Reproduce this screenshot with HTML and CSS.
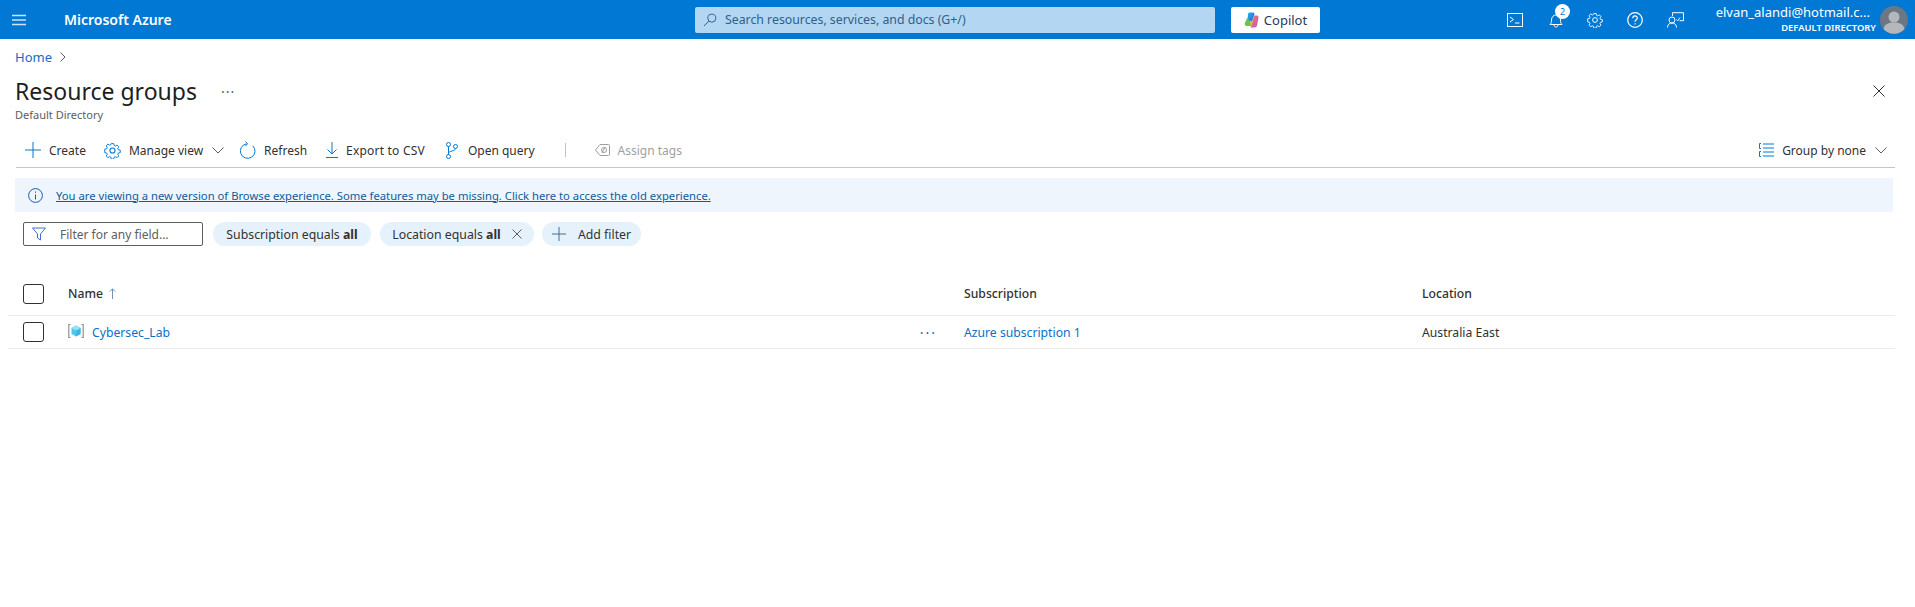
FILE: index.html
```html
<!DOCTYPE html>
<html>
<head>
    <meta charset="utf-8">
    <title>Resource groups - Microsoft Azure</title>
    <link rel="stylesheet" href="styles.css">
</head>
<body>
    <header class="topbar">
        <svg class="menu-icon" width="14" height="12" viewBox="0 0 14 12"><path d="M0 1.5h14M0 6h14M0 10.5h14" stroke="#cfe4f7" stroke-width="1.4"/></svg>
        <div class="brand">Microsoft Azure</div>
        <div class="search">
            <svg width="14" height="14" viewBox="0 0 14 14" fill="none" stroke="#33638f" stroke-width="1"><circle cx="8.8" cy="5.2" r="4"/><path d="M5.900 8 1 13"/></svg>
            <span>Search resources, services, and docs (G+/)</span>
        </div>
        <div class="copilot">
            <svg width="15" height="16" viewBox="0 0 15 16">
                <defs>
                    <linearGradient id="cpa" x1="0" y1="0" x2="1" y2="1"><stop offset="0" stop-color="#1fb6e8"/><stop offset="1" stop-color="#2f62d6"/></linearGradient>
                    <linearGradient id="cpb" x1="0" y1="0" x2="1" y2="1"><stop offset="0" stop-color="#f0843c"/><stop offset="1" stop-color="#c94fd8"/></linearGradient>
                </defs>
                <path d="M5.500 .5h3.500c1.200 0 1.700 1 1.400 2L8 10H3.500L4 2.500C4.100 1.200 4.500.5 5.500.5z" fill="url(#cpa)"/>
                <path d="M10.500 3.500h2.300c1.300 0 2 1 1.700 2.300l-1.300 7.200c-.3 1.500-1.200 2.500-2.700 2.500H6.500L9.500 6z" fill="url(#cpb)"/>
                <path d="M3.500 5.500 1 10.500c-.7 2 .3 3.500 2 3.500h4.500L9 9H5.500z" fill="#6cc24a"/>
                <path d="M5.500 9H9l-1.500 5H6.800z" fill="#e9b23c"/>
            </svg>
            <span>Copilot</span>
        </div>
        <div class="top-icons">
            <svg width="16" height="14" viewBox="0 0 16 14" fill="none" stroke="#fff"><rect x=".5" y=".5" width="15" height="13"/><path d="m3 4 3.500 2.500L3 9M8 10h4.500"/></svg>
            <div class="bell">
                <svg width="14" height="16" viewBox="0 0 14 16" fill="none" stroke="#fff"><path d="M1 12.500c1.200-1 1.500-2 1.500-4.500 0-3 2-5 4.500-5s4.500 2 4.500 5c0 2.500.3 3.500 1.500 4.500zM5 12.800c0 3 4 3 4 0"/></svg>
                <span class="badge">2</span>
            </div>
            <svg width="16" height="16" viewBox="0 0 16 16" fill="none" stroke="#fff"><use href="#gear"/></svg>
            <svg width="16" height="16" viewBox="0 0 16 16" fill="none" stroke="#fff" stroke-width="1.200"><circle cx="8" cy="8" r="7.300"/><path d="M5.800 6.200c0-3 4.500-3 4.500-.2 0 1.800-2.300 1.800-2.300 3.700"/><path d="M8 11.200v1.300"/></svg>
            <svg width="17" height="16" viewBox="0 0 17 16" fill="none" stroke="#fff"><path d="M5.500 4V.7h11v8h-4"/><path d="m9.500 7.500 1.300 1.300L13 5.500" stroke-width=".9"/><circle cx="5" cy="8" r="3"/><path d="M.5 15.500c0-3 2-4.500 4.500-4.500s4.500 1.500 4.500 4.500"/></svg>
        </div>
        <div class="account">
            <div class="acc-mail">elvan_alandi@hotmail.c...</div>
            <div class="acc-dir">DEFAULT DIRECTORY</div>
        </div>
        <svg class="avatar" width="28" height="28" viewBox="0 0 28 28"><circle cx="14" cy="14" r="14" fill="#6b7785"/><circle cx="14" cy="11" r="5.500" fill="#b4b8bd"/><path d="M3.500 23c1-5 5-6.500 10.500-6.500S23.500 18 24.500 23a14 14 0 0 1-21 0z" fill="#b4b8bd"/></svg>
    </header>

    <svg width="0" height="0" class="defs">
        <symbol id="gear" viewBox="0 0 16 16">
            <path d="M6.700.8h2.600l.4 2 1.300.6 1.800-1.100 1.800 1.800-1.100 1.800.6 1.300 2 .4v2.600l-2 .4-.6 1.300 1.100 1.800-1.800 1.800-1.800-1.100-1.300.6-.4 2H6.700l-.4-2-1.300-.6-1.800 1.100-1.800-1.800 1.100-1.800-.6-1.300-2-.4V6.600l2-.4.600-1.300-1.100-1.800 1.800-1.800L5 2.400l1.300-.6z" transform="translate(.8 .8) scale(.9)"/>
            <circle cx="8" cy="8" r="2.400"/>
        </symbol>
    </svg>

    <main class="page">
        <div class="crumbs">
            <a class="link" href="#">Home</a>
            <svg width="6" height="10" viewBox="0 0 6 10" fill="none" stroke="#605e5c"><path d="m.5.500 4.500 4.500L.5 9.500"/></svg>
        </div>

        <div class="title-row">
            <h1>Resource groups</h1>
            <span class="title-dots">···</span>
            <svg class="close" width="12" height="12" viewBox="0 0 12 12" stroke="#323130"><path d="m.5.500 11 11M11.500.500l-11 11"/></svg>
        </div>
        <div class="subtitle">Default Directory</div>

        <div class="toolbar">
            <div class="tool t-create">
                <svg width="16" height="16" viewBox="0 0 16 16" stroke="#0078d4"><path d="M8 0v16M0 8h16"/></svg>
                <span>Create</span>
            </div>
            <div class="tool t-manage">
                <svg width="17" height="17" viewBox="0 0 16 16" fill="none" stroke="#0078d4"><use href="#gear"/></svg>
                <span>Manage view</span>
                <svg class="chev" width="12" height="7" viewBox="0 0 12 7" fill="none" stroke="#605e5c"><path d="m.5.500 5.500 5.500L11.500.500"/></svg>
            </div>
            <div class="tool t-refresh">
                <svg width="16" height="18" viewBox="0 0 16 18" fill="none" stroke="#0078d4"><path d="M12.800 4.800a7.300 7.300 0 1 1-6.300-2"/><path d="M5.500 .5 7.500 2.800 5.500 5"/></svg>
                <span>Refresh</span>
            </div>
            <div class="tool t-export">
                <svg width="12" height="16" viewBox="0 0 12 16" fill="none" stroke="#0078d4"><path d="M6 0v12M1.500 7.500 6 12l4.500-4.500M0 15.500h12"/></svg>
                <span>Export to CSV</span>
            </div>
            <div class="tool t-query">
                <svg width="12" height="17" viewBox="0 0 12 17" fill="none" stroke="#0078d4"><circle cx="2.500" cy="2.500" r="2"/><circle cx="2.500" cy="14.500" r="2"/><circle cx="9.500" cy="4.500" r="2"/><path d="M2.500 4.500v8M9.500 6.500c0 3-7 2-7 5"/></svg>
                <span>Open query</span>
            </div>
            <div class="tool-sep"></div>
            <div class="tool t-tags muted">
                <svg width="15" height="12" viewBox="0 0 15 12" fill="none" stroke="#a19f9d"><path d="M5 .5h8.500a1 1 0 0 1 1 1v9a1 1 0 0 1-1 1H5L.5 6zM10 3 7 9"/><circle cx="9" cy="6" r="2.500"/></svg>
                <span>Assign tags</span>
            </div>
            <div class="tool t-group">
                <svg width="15" height="14" viewBox="0 0 15 14" fill="none" stroke="#0078d4"><path d="M4 1h11M4 5h11M4 9h11M4 13h11M2 .5H.5v5H2M2 8.500H.5v5H2"/></svg>
                <span>Group by none</span>
                <svg class="chev" width="12" height="7" viewBox="0 0 12 7" fill="none" stroke="#605e5c"><path d="m.5.500 5.500 5.500L11.500.500"/></svg>
            </div>
        </div>

        <div class="notice">
            <svg width="15" height="15" viewBox="0 0 15 15" fill="none" stroke="#0f5cc0"><circle cx="7.500" cy="7.500" r="6.900"/><path d="M7.500 6.500v5M7.500 3.500v1.300"/></svg>
            <a href="#">You are viewing a new version of Browse experience. Some features may be missing. Click here to access the old experience.</a>
        </div>

        <div class="filters">
            <div class="filter-box">
                <svg width="14" height="14" viewBox="0 0 14 14" fill="none" stroke="#3f6fd8"><path d="M.5 1h13L8.500 7v6l-3-2V7z"/></svg>
                <span>Filter for any field...</span>
            </div>
            <div class="pill p-sub"><span>Subscription equals <b>all</b></span></div>
            <div class="pill p-loc">
                <span>Location equals <b>all</b></span>
                <svg width="10" height="10" viewBox="0 0 10 10" stroke="#605e5c"><path d="m.5.500 9 9M9.500.500l-9 9"/></svg>
            </div>
            <div class="pill p-add">
                <svg width="14" height="14" viewBox="0 0 14 14" stroke="#3a6f9e"><path d="M7 0v14M0 7h14"/></svg>
                <span>Add filter</span>
            </div>
        </div>

        <div class="grid">
            <div class="row head">
                <div class="cell-check"><span class="check"></span></div>
                <div class="cell-name">
                    <span>Name</span>
                    <svg class="sort" width="7" height="11" viewBox="0 0 7 11" fill="none" stroke="#6f95b5"><path d="M3.500 11V.8M.8 3.500 3.500.8l2.700 2.700"/></svg>
                </div>
                <div>Subscription</div>
                <div>Location</div>
            </div>
            <div class="row item">
                <div class="cell-check"><span class="check"></span></div>
                <div class="cell-name">
                    <svg class="rg-icon" width="16" height="16" viewBox="0 0 16 16">
                        <path d="M2.500 1.500H.8v13h1.700M13.500 1.500h1.700v13h-1.700" fill="none" stroke="#8a8a8a" stroke-width="1.100"/>
                        <path d="m8 2.500 4.500 2.500v6L8 13.500 3.500 11V5z" fill="#50c7e8"/>
                        <path d="m8 8 4.500-3v6L8 13.500z" fill="#3fb4e6"/>
                        <path d="m8 2.500 4.500 2.500L8 7.600 3.500 5z" fill="#8fe3f5"/>
                    </svg>
                    <a class="link" href="#">Cybersec_Lab</a>
                    <span class="row-dots">···</span>
                </div>
                <div><a class="link" href="#">Azure subscription 1</a></div>
                <div>Australia East</div>
            </div>
        </div>
    </main>
</body>
</html>
```

FILE: styles.css
```css
body {
    margin: 0;
    background: #fff;
    color: #323130;
    font-family: "Noto Sans", "Open Sans", sans-serif;
    font-size: 12px;
}
a {
    text-decoration: none;
}
.link {
    color: #0b6fc9;
}
.defs {
    display: block;
    height: 0;
}

/* top bar */
.topbar {
    display: flex;
    align-items: center;
    height: 39px;
    background: #0078d4;
    color: #fff;
}
.menu-icon {
    margin-left: 12px;
}
.brand {
    margin-left: 38px;
    width: 631px;
    font-size: 14px;
    font-weight: 600;
}
.search {
    display: flex;
    align-items: center;
    gap: 8px;
    box-sizing: border-box;
    width: 520px;
    height: 26px;
    padding-left: 8px;
    background: #b3d6f2;
    border-radius: 2px;
    color: #2f5f8a;
    font-size: 12.3px;
}
.copilot {
    display: flex;
    align-items: center;
    justify-content: center;
    gap: 5px;
    width: 89px;
    height: 26px;
    margin-left: 16px;
    background: #fff;
    border-radius: 2px;
    color: #243a5e;
    font-size: 13px;
}
.top-icons {
    display: flex;
    align-items: center;
    margin-left: 187px;
    gap: 24px;
}
.bell {
    position: relative;
    display: flex;
    margin-left: 2px;
}
.badge {
    position: absolute;
    left: 6px;
    top: -8px;
    width: 15px;
    height: 15px;
    border-radius: 50%;
    background: #fff;
    color: #0078d4;
    font-size: 9px;
    line-height: 15px;
    text-align: center;
}
.account {
    width: 193px;
    margin-left: -1px;
    text-align: right;
}
.acc-mail {
    padding-right: 6px;
    font-size: 13px;
    line-height: 16px;
}
.acc-dir {
    font-size: 9.4px;
    font-weight: 600;
    line-height: 15px;
}
.avatar {
    margin-left: 4px;
}

/* page */
.crumbs {
    display: flex;
    align-items: center;
    gap: 8px;
    height: 18px;
    margin: 9px 0 0 15px;
    font-size: 13px;
}
.title-row {
    display: flex;
    align-items: center;
    height: 32px;
    margin: 9px 0 0 15px;
}
h1 {
    margin: 0;
    font-size: 23px;
    font-weight: 400;
    color: #201f1e;
}
.title-dots {
    margin-left: 24px;
    color: #605e5c;
    font-size: 14px;
    letter-spacing: 1px;
}
.close {
    margin-left: auto;
    margin-right: 30px;
}
.subtitle {
    margin: 0 0 0 15px;
    height: 16px;
    line-height: 16px;
    color: #605e5c;
    font-size: 11px;
}
.toolbar {
    display: flex;
    align-items: center;
    height: 34px;
    margin: 10px 20px 0 16px;
    border-bottom: 1px solid #c8c6c4;
}
.tool {
    display: flex;
    align-items: center;
    gap: 8px;
}
.chev {
    margin-left: 1px;
}
.t-create {
    margin-left: 9px;
}
.t-manage {
    margin-left: 18px;
}
.t-refresh {
    margin-left: 16px;
}
.t-export {
    margin-left: 19px;
}
.t-export span {
    letter-spacing: .2px;
}
.t-query {
    margin-left: 21px;
}
.t-query span {
    margin-left: 2px;
}
.tool-sep {
    width: 1px;
    height: 14px;
    margin-left: 30px;
    background: #a6c8e6;
}
.t-tags {
    margin-left: 29px;
}
.muted {
    color: #a19f9d;
}
.t-group {
    margin-left: auto;
    margin-right: 8px;
}
.notice {
    display: flex;
    align-items: center;
    gap: 13px;
    box-sizing: border-box;
    height: 34px;
    margin: 10px 22px 0 15px;
    padding-left: 13px;
    background: #eef5fc;
    font-size: 11.25px;
}
.notice a {
    color: #0f5c9e;
    text-decoration: underline;
}
.filters {
    display: flex;
    align-items: center;
    height: 24px;
    margin: 10px 0 0 23px;
}
.filter-box {
    display: flex;
    align-items: center;
    gap: 14px;
    box-sizing: border-box;
    width: 180px;
    height: 24px;
    padding-left: 8px;
    border: 1px solid #605e5c;
    border-radius: 2px;
    color: #605e5c;
}
.pill {
    display: flex;
    align-items: center;
    justify-content: center;
    height: 24px;
    border-radius: 12px;
    background: #e6f2fb;
    font-size: 12.3px;
}
.p-sub {
    width: 158px;
    margin-left: 10px;
}
.p-loc {
    width: 154px;
    margin-left: 9px;
}
.p-loc svg {
    margin-left: 11px;
}
.p-add {
    width: 99px;
    margin-left: 8px;
    gap: 12px;
}

/* table */
.grid {
    margin: 0 20px 0 8px;
    padding-top: 30px;
    font-size: 12.2px;
}
.row {
    display: grid;
    grid-template-columns: 60px 896px 458px 1fr;
    align-items: center;
    border-bottom: 1px solid #edebe9;
}
.head {
    box-sizing: border-box;
    height: 40px;
    padding-bottom: 4px;
    font-weight: 500;
    color: #323130;
}
.item {
    height: 32px;
}
.cell-check {
    display: flex;
    padding-left: 15px;
}
.check {
    box-sizing: border-box;
    width: 21px;
    height: 20px;
    border: 1px solid #323130;
    border-radius: 3px;
}
.cell-name {
    display: flex;
    align-items: center;
    gap: 8px;
}
.sort {
    margin-left: -2px;
}
.rg-icon {
    margin-top: -3px;
}
.row-dots {
    margin-left: auto;
    margin-right: 27px;
    color: #0f6cbd;
    font-size: 14px;
    letter-spacing: 2px;
}
```
